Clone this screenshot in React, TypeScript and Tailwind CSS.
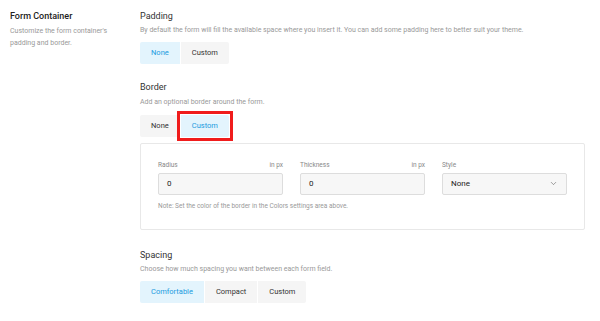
import { ChevronDown } from "lucide-react";

const Seg: React.FC<{ items: string[]; active: number; boxed?: number }> = ({
  items,
  active,
  boxed,
}) => (
  <div className="flex">
    {items.map((item, i) => (
      <div
        key={item}
        className={
          "relative h-[22px] px-[11px] flex items-center text-[7.5px] " +
          (i === active ? "bg-[#e3f4fd] text-[#1b9be0]" : "bg-[#f5f5f5] text-[#333]") +
          (i === 0 ? " rounded-l-[2px]" : "") +
          (i === items.length - 1 ? " rounded-r-[2px]" : "") +
          (i > 0 ? " ml-[1px]" : "")
        }
      >
        {item}
        {boxed === i && (
          <div className="absolute inset-[-4px] border-[3px] border-[#f01c1c]" />
        )}
      </div>
    ))}
  </div>
);

const Field: React.FC<{ label: string; value: string; unit?: boolean }> = ({
  label,
  value,
  unit,
}) => (
  <div className="w-[125px]">
    <div className="flex justify-between text-[6.5px] text-[#888] mb-[2px]">
      <span>{label}</span>
      {unit && <span>in px</span>}
    </div>
    <div className="h-[22px] bg-[#f7f7f7] border border-[#ddd] rounded-[2px] flex items-center px-[8px] text-[8px] text-[#222]">
      {value}
    </div>
  </div>
);

export default function App() {
  return (
    <div
      className="w-[600px] h-[321px] bg-white flex"
      style={{ fontFamily: "Roboto, sans-serif" }}
    >
      <div className="w-[140px] pl-[10px] pt-[10px] pr-[20px]">
        <h2 className="text-[9px] font-medium text-[#222] leading-[12px]">Form Container</h2>
        <p className="mt-[3px] text-[7px] leading-[12px] text-[#999]">
          Customize the form container's padding and border.
        </p>
      </div>
      <div className="flex-1 pt-[10px] pr-[15px]">
        <h3 className="text-[9px] text-[#333] leading-[12px]">Padding</h3>
        <p className="mt-[3px] text-[7px] text-[#999] leading-[10px]">
          By default the form will fill the available space where you insert it. You can add some padding here to better suit your theme.
        </p>
        <div className="mt-[7px]">
          <Seg items={["None", "Custom"]} active={0} />
        </div>

        <h3 className="mt-[17px] text-[9px] text-[#333] leading-[12px]">Border</h3>
        <p className="mt-[4px] text-[7px] text-[#999] leading-[10px]">
          Add an optional border around the form.
        </p>
        <div className="mt-[8px]">
          <Seg items={["None", "Custom"]} active={1} boxed={1} />
        </div>
        <div className="mt-[6px] border border-[#e8e8e8] rounded-[2px] px-[17px] pt-[17px] pb-[17px]">
          <div className="flex gap-[17px]">
            <Field label="Radius" value="0" unit />
            <Field label="Thickness" value="0" unit />
            <div className="w-[125px]">
              <div className="text-[6.5px] text-[#888] mb-[2px]">Style</div>
              <div className="h-[22px] bg-[#f7f7f7] border border-[#ddd] rounded-[2px] flex items-center justify-between px-[8px] text-[8px] text-[#222]">
                None
                <ChevronDown size={9} strokeWidth={1.5} className="text-[#555]" />
              </div>
            </div>
          </div>
          <p className="mt-[7px] text-[6.5px] text-[#999]">
            Note: Set the color of the border in the Colors settings area above.
          </p>
        </div>

        <h3 className="mt-[19px] text-[9px] text-[#333] leading-[12px]">Spacing</h3>
        <p className="mt-[3px] text-[7px] text-[#999] leading-[10px]">
          Choose how much spacing you want between each form field.
        </p>
        <div className="mt-[7px]">
          <Seg items={["Comfortable", "Compact", "Custom"]} active={0} />
        </div>
      </div>
    </div>
  );
}
